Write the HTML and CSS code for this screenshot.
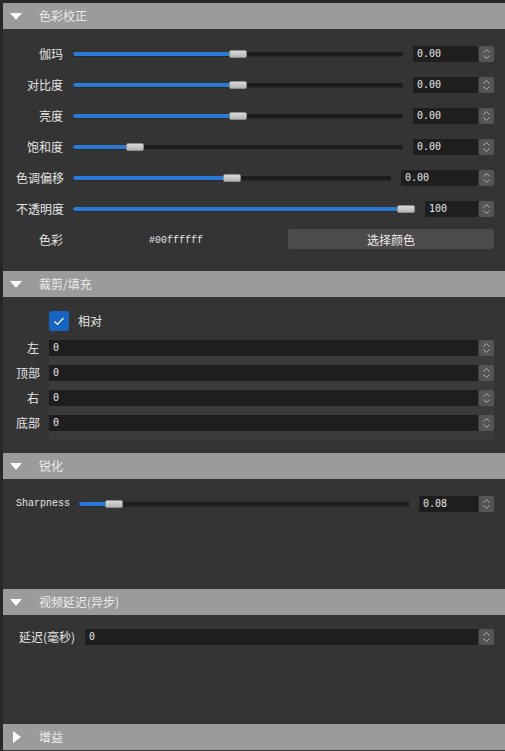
FILE: index.html
```html
<!DOCTYPE html>
<html>
<head>
<meta charset="utf-8">
<link rel="stylesheet" href="styles.css">
</head>
<body>
<div class="panel">

  <div class="sec-head"><span class="tri-down"></span><span class="sec-title">色彩校正</span></div>
  <div class="sec-body body-1">
    <div class="row">
      <span class="lbl lw-47">伽玛</span>
      <div class="slider" style="--p:0.5"><div class="fill"></div><div class="knob"></div></div>
      <div class="spin sw-65">0.00</div>
      <div class="arrows"><svg width="15" height="16" viewBox="0 0 15 16"><rect width="15" height="16" rx="2" fill="#555"/><path d="M4.5 6.5 L7.5 3.5 L10.5 6.5 M4.5 9.5 L7.5 12.5 L10.5 9.5" fill="none" stroke="#b0b0b0" stroke-width="1"/></svg></div>
    </div>
    <div class="row">
      <span class="lbl lw-47">对比度</span>
      <div class="slider" style="--p:0.5"><div class="fill"></div><div class="knob"></div></div>
      <div class="spin sw-65">0.00</div>
      <div class="arrows"><svg width="15" height="16" viewBox="0 0 15 16"><rect width="15" height="16" rx="2" fill="#555"/><path d="M4.5 6.5 L7.5 3.5 L10.5 6.5 M4.5 9.5 L7.5 12.5 L10.5 9.5" fill="none" stroke="#b0b0b0" stroke-width="1"/></svg></div>
    </div>
    <div class="row">
      <span class="lbl lw-47">亮度</span>
      <div class="slider" style="--p:0.5"><div class="fill"></div><div class="knob"></div></div>
      <div class="spin sw-65">0.00</div>
      <div class="arrows"><svg width="15" height="16" viewBox="0 0 15 16"><rect width="15" height="16" rx="2" fill="#555"/><path d="M4.5 6.5 L7.5 3.5 L10.5 6.5 M4.5 9.5 L7.5 12.5 L10.5 9.5" fill="none" stroke="#b0b0b0" stroke-width="1"/></svg></div>
    </div>
    <div class="row">
      <span class="lbl lw-47">饱和度</span>
      <div class="slider" style="--p:0.17"><div class="fill"></div><div class="knob"></div></div>
      <div class="spin sw-65">0.00</div>
      <div class="arrows"><svg width="15" height="16" viewBox="0 0 15 16"><rect width="15" height="16" rx="2" fill="#555"/><path d="M4.5 6.5 L7.5 3.5 L10.5 6.5 M4.5 9.5 L7.5 12.5 L10.5 9.5" fill="none" stroke="#b0b0b0" stroke-width="1"/></svg></div>
    </div>
    <div class="row">
      <span class="lbl lw-47">色调偏移</span>
      <div class="slider" style="--p:0.5"><div class="fill"></div><div class="knob"></div></div>
      <div class="spin sw-77">0.00</div>
      <div class="arrows"><svg width="15" height="16" viewBox="0 0 15 16"><rect width="15" height="16" rx="2" fill="#555"/><path d="M4.5 6.5 L7.5 3.5 L10.5 6.5 M4.5 9.5 L7.5 12.5 L10.5 9.5" fill="none" stroke="#b0b0b0" stroke-width="1"/></svg></div>
    </div>
    <div class="row">
      <span class="lbl lw-47">不透明度</span>
      <div class="slider" style="--p:1"><div class="fill"></div><div class="knob"></div></div>
      <div class="spin sw-53">100</div>
      <div class="arrows"><svg width="15" height="16" viewBox="0 0 15 16"><rect width="15" height="16" rx="2" fill="#555"/><path d="M4.5 6.5 L7.5 3.5 L10.5 6.5 M4.5 9.5 L7.5 12.5 L10.5 9.5" fill="none" stroke="#b0b0b0" stroke-width="1"/></svg></div>
    </div>
    <div class="row">
      <span class="lbl lw-47">色彩</span>
      <span class="hex">#00ffffff</span>
      <button class="pick">选择颜色</button>
    </div>
  </div>

  <div class="sec-head"><span class="tri-down"></span><span class="sec-title">裁剪/填充</span></div>
  <div class="sec-body body-2">
    <div class="check-row">
      <span class="check"><svg width="20" height="20" viewBox="0 0 20 20"><path d="M5.5 10.5 L8.5 13.5 L14.5 7" fill="none" stroke="#fff" stroke-width="1.2"/></svg></span>
      <span class="check-lbl">相对</span>
    </div>
    <div class="frow">
      <span class="lbl lw-23">左</span>
      <div class="field"><div class="input">0</div><div class="arrows"><svg width="15" height="16" viewBox="0 0 15 16"><rect width="15" height="16" rx="2" fill="#555"/><path d="M4.5 6.5 L7.5 3.5 L10.5 6.5 M4.5 9.5 L7.5 12.5 L10.5 9.5" fill="none" stroke="#b0b0b0" stroke-width="1"/></svg></div></div>
    </div>
    <div class="frow">
      <span class="lbl lw-23">顶部</span>
      <div class="field"><div class="input">0</div><div class="arrows"><svg width="15" height="16" viewBox="0 0 15 16"><rect width="15" height="16" rx="2" fill="#555"/><path d="M4.5 6.5 L7.5 3.5 L10.5 6.5 M4.5 9.5 L7.5 12.5 L10.5 9.5" fill="none" stroke="#b0b0b0" stroke-width="1"/></svg></div></div>
    </div>
    <div class="frow">
      <span class="lbl lw-23">右</span>
      <div class="field"><div class="input">0</div><div class="arrows"><svg width="15" height="16" viewBox="0 0 15 16"><rect width="15" height="16" rx="2" fill="#555"/><path d="M4.5 6.5 L7.5 3.5 L10.5 6.5 M4.5 9.5 L7.5 12.5 L10.5 9.5" fill="none" stroke="#b0b0b0" stroke-width="1"/></svg></div></div>
    </div>
    <div class="frow">
      <span class="lbl lw-23">底部</span>
      <div class="field"><div class="input">0</div><div class="arrows"><svg width="15" height="16" viewBox="0 0 15 16"><rect width="15" height="16" rx="2" fill="#555"/><path d="M4.5 6.5 L7.5 3.5 L10.5 6.5 M4.5 9.5 L7.5 12.5 L10.5 9.5" fill="none" stroke="#b0b0b0" stroke-width="1"/></svg></div></div>
    </div>
  </div>

  <div class="sec-head"><span class="tri-down"></span><span class="sec-title">锐化</span></div>
  <div class="sec-body body-3">
    <div class="row">
      <span class="lbl lw-53 latin">Sharpness</span>
      <div class="slider" style="--p:0.084"><div class="fill"></div><div class="knob"></div></div>
      <div class="spin sw-59">0.08</div>
      <div class="arrows"><svg width="15" height="16" viewBox="0 0 15 16"><rect width="15" height="16" rx="2" fill="#555"/><path d="M4.5 6.5 L7.5 3.5 L10.5 6.5 M4.5 9.5 L7.5 12.5 L10.5 9.5" fill="none" stroke="#b0b0b0" stroke-width="1"/></svg></div>
    </div>
  </div>

  <div class="sec-head"><span class="tri-down"></span><span class="sec-title">视频延迟(异步)</span></div>
  <div class="sec-body body-4">
    <div class="row">
      <span class="lbl lw-59">延迟(毫秒)</span>
      <div class="field flat"><div class="input">0</div><div class="arrows"><svg width="15" height="16" viewBox="0 0 15 16"><rect width="15" height="16" rx="2" fill="#555"/><path d="M4.5 6.5 L7.5 3.5 L10.5 6.5 M4.5 9.5 L7.5 12.5 L10.5 9.5" fill="none" stroke="#b0b0b0" stroke-width="1"/></svg></div></div>
    </div>
  </div>

  <div class="sec-head"><span class="tri-right"></span><span class="sec-title gap-r">增益</span></div>

</div>
</body>
</html>
```

FILE: styles.css
```css
* { box-sizing: border-box; }

html, body {
  margin: 0;
  padding: 0;
  height: 100%;
  overflow: hidden;
}

body {
  background: #282828;
  padding: 3px 0 0 3px;
  font-family: "Noto Sans CJK SC", "Noto Sans", sans-serif;
  font-size: 12px;
  color: #e2e2e2;
}

.panel {
  background: #343434;
  min-height: 100%;
  display: flex;
  flex-direction: column;
}

.sec-head {
  height: 26px;
  background: #9b9b9b;
  display: flex;
  align-items: center;
  padding-left: 7px;
  flex: none;
}

.tri-down {
  width: 0;
  height: 0;
  border-left: 6px solid transparent;
  border-right: 6px solid transparent;
  border-top: 7px solid #ffffff;
}

.tri-right {
  width: 0;
  height: 0;
  margin-left: 3px;
  border-top: 6.5px solid transparent;
  border-bottom: 6.5px solid transparent;
  border-left: 8px solid #ffffff;
}

.sec-title {
  margin-left: 17px;
  color: #ececec;
  font-size: 12px;
  line-height: 16px;
}

.sec-title.gap-r { margin-left: 18px; }

.sec-body {
  padding-left: 13px;
  padding-right: 11px;
  display: flex;
  flex-direction: column;
  flex: none;
}

.body-1 { height: 242px; padding-top: 17px; gap: 15px; }
.body-2 { height: 156px; padding-top: 14px; }
.body-3 { height: 110px; padding-top: 17px; }
.body-4 { height: 109px; padding-top: 14px; }

.row {
  display: flex;
  align-items: center;
  height: 16px;
}

.lbl {
  flex: none;
  text-align: right;
  margin-right: 10px;
  white-space: nowrap;
  line-height: 16px;
  color: #e4e4e4;
}

.lw-23 { width: 23px; }
.lw-47 { width: 47px; }
.lw-53 { width: 53px; }
.lw-59 { width: 59px; }

.latin {
  font-family: "Liberation Mono", "DejaVu Sans Mono", monospace;
  font-size: 10px;
  text-align: left;
  letter-spacing: 0;
}

.slider {
  flex: 1;
  position: relative;
  height: 8px;
  margin-right: 10px;
}

.slider::before {
  content: "";
  position: absolute;
  left: 0;
  right: 0;
  top: 2px;
  height: 4px;
  background: #1d1d1d;
  border-bottom: 1px solid #2a2a2a;
}

.fill {
  position: absolute;
  left: 0;
  top: 2px;
  height: 4px;
  border-radius: 2px;
  background: #2a7ad5;
  width: calc(var(--p) * (100% - 18px) + 9px);
}

.knob {
  position: absolute;
  top: 0;
  width: 18px;
  height: 8px;
  border-radius: 2px;
  background: linear-gradient(#dadada, #b4b4b4);
  border: 1px solid #8e8e8e;
  left: calc(var(--p) * (100% - 18px));
}

.spin {
  flex: none;
  height: 16px;
  background: #1e1e1e;
  padding-left: 4px;
  font-family: "DejaVu Sans Mono", monospace;
  font-size: 10px;
  line-height: 16px;
  color: #e6e6e6;
  margin-right: 1px;
}

.sw-53 { width: 53px; }
.sw-59 { width: 59px; }
.sw-65 { width: 65px; }
.sw-77 { width: 77px; }

.arrows {
  flex: none;
  width: 15px;
  height: 16px;
}

.arrows svg { display: block; }

.hex {
  flex: none;
  margin-left: 76px;
  width: 139px;
  font-family: "Liberation Mono", "DejaVu Sans Mono", monospace;
  font-size: 10px;
  color: #e6e6e6;
}

.pick {
  flex: 1;
  align-self: flex-start;
  margin-top: -3px;
  height: 20px;
  border: none;
  border-radius: 2px;
  background: #4b4b4b;
  color: #ececec;
  font-family: "Noto Sans CJK SC", "Noto Sans", sans-serif;
  font-size: 12px;
  padding: 0;
}

.check-row {
  display: flex;
  align-items: center;
  padding-left: 33px;
  height: 20px;
  margin-bottom: 9px;
}

.check {
  width: 20px;
  height: 20px;
  border-radius: 3px;
  background: #1765c3;
  margin-right: 9px;
}

.check svg { display: block; }

.check-lbl {
  color: #e6e6e6;
  line-height: 16px;
}

.frow {
  display: flex;
  align-items: flex-start;
  height: 25px;
}

.frow .lbl { height: 16px; }

.field {
  flex: 1;
  display: flex;
  height: 25px;
  padding-bottom: 9px;
  background: #3b3b3b;
}

.field.flat {
  height: 16px;
  padding-bottom: 0;
  background: transparent;
}

.input {
  flex: 1;
  height: 16px;
  background: #1e1e1e;
  padding-left: 4px;
  margin-right: 1px;
  font-family: "DejaVu Sans Mono", monospace;
  font-size: 10px;
  line-height: 16px;
  color: #e6e6e6;
}
```
